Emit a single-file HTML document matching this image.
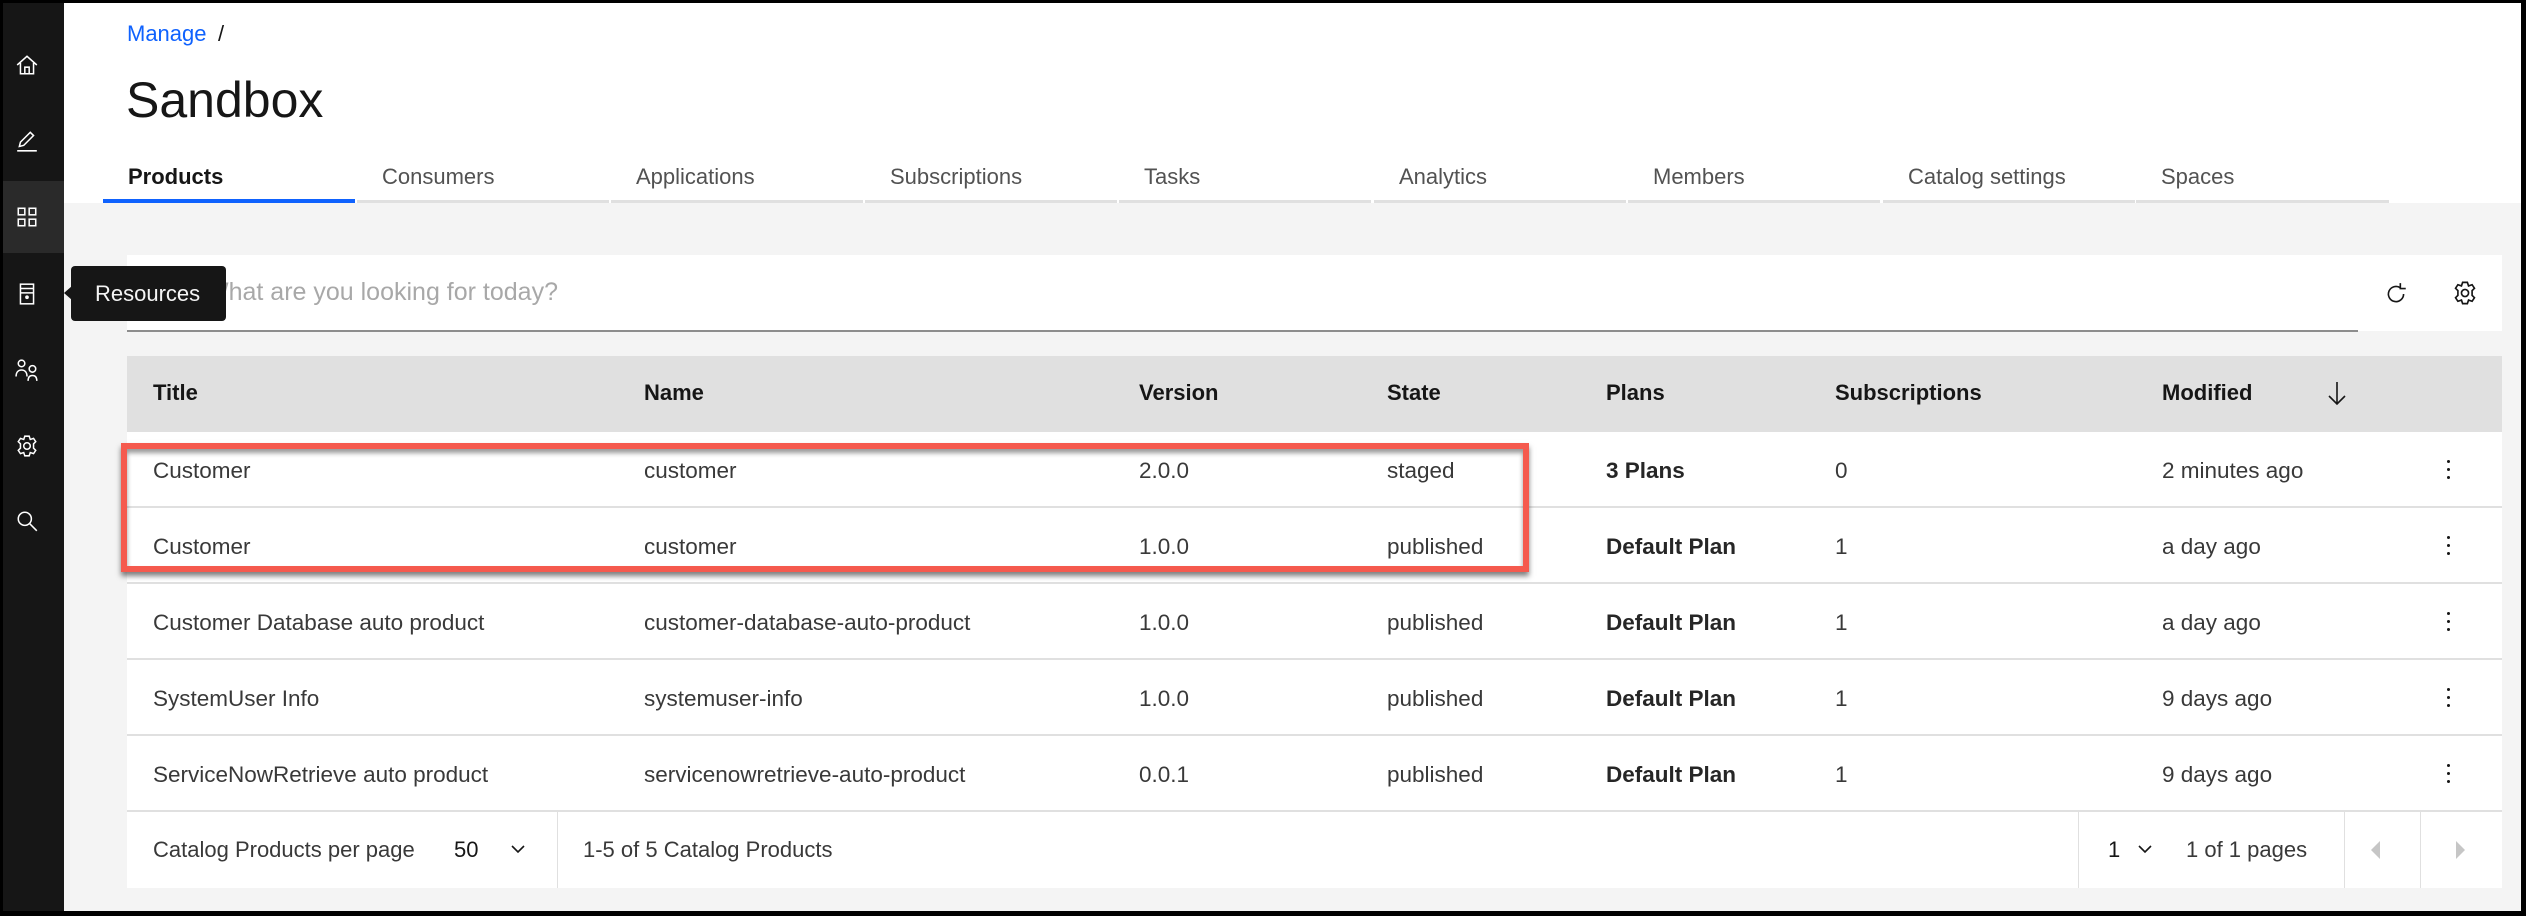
<!DOCTYPE html>
<html><head><meta charset="utf-8"><style>
*{box-sizing:border-box;margin:0;padding:0}
body{width:2526px;height:916px;background:#000;font-family:"Liberation Sans",sans-serif;color:#161616;position:relative;overflow:hidden}
.abs{position:absolute}
#main{position:absolute;left:64px;top:3px;width:2457px;height:908px;background:#f4f4f4}
#top{position:absolute;left:64px;top:3px;width:2457px;height:200px;background:#fff}
#side{position:absolute;left:3px;top:3px;width:61px;height:908px;background:#161616}
.ic{position:absolute;left:12px;width:24px;height:24px}
.t{position:absolute;font-size:22px;white-space:nowrap;line-height:1}
.tab{position:absolute;top:155px;height:48px;border-bottom:3px solid #e0e0e0;font-size:22px;color:#525252;padding-left:25px;padding-top:9px}
.hdr{font-weight:bold}
.row{position:absolute;left:127px;width:2375px;height:76px;background:#fff;border-bottom:2px solid #e0e0e0}
.row span{position:absolute;top:28px;font-size:22.5px;white-space:nowrap;color:#393939;line-height:1}
.b{font-weight:bold;color:#262626!important}
.keb{position:absolute;left:2320px;top:28px;width:4px}
.keb i{display:block;width:3px;height:3px;background:#161616;border-radius:2px;margin-bottom:5px}
</style></head><body>
<div id="main"></div>
<div id="top"></div>
<div id="side">
 <div class="abs" style="left:0;top:178px;width:61px;height:72px;background:#2a2a2a"></div>
 <svg class="ic" style="top:50px" viewBox="0 0 22 22" fill="none" stroke="#fff" stroke-width="1.4"><path d="M2 11L11 3l9 8M5 9v10h12V9M9 19v-6h4v6"/></svg>
 <svg class="ic" style="top:126px" viewBox="0 0 22 22" fill="none" stroke="#fff" stroke-width="1.4"><path d="M4 16l1-4 9-9 3 3-9 9-4 1zM2 20h18"/></svg>
 <svg class="ic" style="top:202px" viewBox="0 0 22 22" fill="none" stroke="#fff" stroke-width="1.4"><rect x="3" y="3" width="6" height="6"/><rect x="13" y="3" width="6" height="6"/><rect x="3" y="13" width="6" height="6"/><rect x="13" y="13" width="6" height="6"/></svg>
 <svg class="ic" style="top:279px" viewBox="0 0 22 22" fill="none" stroke="#fff" stroke-width="1.4"><rect x="5" y="2" width="12" height="18"/><path d="M5 6h12M5 10h12"/><circle cx="11" cy="14" r="1" fill="#fff"/></svg>
 <svg class="ic" style="top:355px" viewBox="0 0 22 22" fill="none" stroke="#fff" stroke-width="1.4"><circle cx="6" cy="5" r="3"/><path d="M1 17c0-4 2-6 5-6s5 2 5 6"/><circle cx="16" cy="10" r="3"/><path d="M12 21c0-3 1-5 4-5s4 2 4 5"/></svg>
 <svg class="ic" style="top:431px" viewBox="0 0 22 22" fill="none" stroke="#fff" stroke-width="1.4"><circle cx="11" cy="11" r="3"/><path d="M9 2h4l1 3 3-1 2 3-2 2v4l2 2-2 3-3-1-1 3H9l-1-3-3 1-2-3 2-2V9L3 7l2-3 3 1z"/></svg>
 <svg class="ic" style="top:506px" viewBox="0 0 22 22" fill="none" stroke="#fff" stroke-width="1.4"><circle cx="9" cy="9" r="6"/><path d="M13.5 13.5L20 20"/></svg>
</div>
<div class="t" style="left:127px;top:23px;color:#0f62fe">Manage</div>
<div class="t" style="left:218px;top:23px">/</div>
<div class="t" style="left:126px;top:75px;font-size:50px">Sandbox</div>

<div class="tab" style="left:103px;width:252px;border-bottom:4px solid #0f62fe;color:#161616;font-weight:bold">Products</div>
<div class="tab" style="left:357px;width:252px">Consumers</div>
<div class="tab" style="left:611px;width:252px">Applications</div>
<div class="tab" style="left:865px;width:252px">Subscriptions</div>
<div class="tab" style="left:1119px;width:252px">Tasks</div>
<div class="tab" style="left:1374px;width:252px">Analytics</div>
<div class="tab" style="left:1628px;width:252px">Members</div>
<div class="tab" style="left:1883px;width:252px">Catalog settings</div>
<div class="tab" style="left:2136px;width:253px">Spaces</div>

<div class="abs" style="left:127px;top:255px;width:2375px;height:76px;background:#fff"></div>
<div class="abs" style="left:127px;top:330px;width:2231px;height:2px;background:#8d8d8d"></div>
<div class="t" style="left:205px;top:280px;font-size:25px;color:#a8a8a8">What are you looking for today?</div>
<svg class="abs" style="left:2383px;top:281px" width="26" height="26" viewBox="0 0 24 24" fill="none" stroke="#161616" stroke-width="1.5"><path d="M19 12a7 7 0 1 1-3-5.7M16 2v5h5"/></svg>
<svg class="abs" style="left:2452px;top:280px" width="26" height="26" viewBox="0 0 22 22" fill="none" stroke="#161616" stroke-width="1.4"><circle cx="11" cy="11" r="3"/><path d="M9 2h4l1 3 3-1 2 3-2 2v4l2 2-2 3-3-1-1 3H9l-1-3-3 1-2-3 2-2V9L3 7l2-3 3 1z"/></svg>

<div class="abs" style="left:71px;top:266px;width:155px;height:55px;background:#161616;border-radius:4px"></div>
<div class="abs" style="left:64px;top:286px;width:0;height:0;border-top:7px solid transparent;border-bottom:7px solid transparent;border-right:8px solid #161616"></div>
<div class="t" style="left:95px;top:283px;color:#f4f4f4">Resources</div>

<div class="abs" style="left:127px;top:356px;width:2375px;height:76px;background:#e0e0e0"></div>
<div class="t hdr" style="left:153px;top:382px">Title</div>
<div class="t hdr" style="left:644px;top:382px">Name</div>
<div class="t hdr" style="left:1139px;top:382px">Version</div>
<div class="t hdr" style="left:1387px;top:382px">State</div>
<div class="t hdr" style="left:1606px;top:382px">Plans</div>
<div class="t hdr" style="left:1835px;top:382px">Subscriptions</div>
<div class="t hdr" style="left:2162px;top:382px">Modified</div>
<svg class="abs" style="left:2326px;top:380px" width="22" height="26" viewBox="0 0 22 26" fill="none" stroke="#161616" stroke-width="1.6"><path d="M11 2v22M3 16l8 8 8-8"/></svg>

<div class="row" style="top:432px"><span style="left:26px">Customer</span><span style="left:517px">customer</span><span style="left:1012px">2.0.0</span><span style="left:1260px">staged</span><span class="b" style="left:1479px">3 Plans</span><span style="left:1708px">0</span><span style="left:2035px">2 minutes ago</span><div class="keb"><i></i><i></i><i></i></div></div>
<div class="row" style="top:508px"><span style="left:26px">Customer</span><span style="left:517px">customer</span><span style="left:1012px">1.0.0</span><span style="left:1260px">published</span><span class="b" style="left:1479px">Default Plan</span><span style="left:1708px">1</span><span style="left:2035px">a day ago</span><div class="keb"><i></i><i></i><i></i></div></div>
<div class="row" style="top:584px"><span style="left:26px">Customer Database auto product</span><span style="left:517px">customer-database-auto-product</span><span style="left:1012px">1.0.0</span><span style="left:1260px">published</span><span class="b" style="left:1479px">Default Plan</span><span style="left:1708px">1</span><span style="left:2035px">a day ago</span><div class="keb"><i></i><i></i><i></i></div></div>
<div class="row" style="top:660px"><span style="left:26px">SystemUser Info</span><span style="left:517px">systemuser-info</span><span style="left:1012px">1.0.0</span><span style="left:1260px">published</span><span class="b" style="left:1479px">Default Plan</span><span style="left:1708px">1</span><span style="left:2035px">9 days ago</span><div class="keb"><i></i><i></i><i></i></div></div>
<div class="row" style="top:736px"><span style="left:26px">ServiceNowRetrieve auto product</span><span style="left:517px">servicenowretrieve-auto-product</span><span style="left:1012px">0.0.1</span><span style="left:1260px">published</span><span class="b" style="left:1479px">Default Plan</span><span style="left:1708px">1</span><span style="left:2035px">9 days ago</span><div class="keb"><i></i><i></i><i></i></div></div>

<div class="abs" style="left:121px;top:443px;width:1408px;height:129px;border:6px solid #f55a4e;box-shadow:0 4px 5px rgba(0,0,0,.5), inset 0 4px 5px rgba(0,0,0,.4)"></div>

<div class="abs" style="left:127px;top:812px;width:2375px;height:76px;background:#fff"></div>
<div class="t" style="left:153px;top:839px;color:#393939">Catalog Products per page</div>
<div class="t" style="left:454px;top:839px">50</div>
<svg class="abs" style="left:510px;top:843px" width="16" height="12" viewBox="0 0 16 12" fill="none" stroke="#161616" stroke-width="1.6"><path d="M2 3l6 6 6-6"/></svg>
<div class="abs" style="left:557px;top:812px;width:1px;height:76px;background:#e0e0e0"></div>
<div class="t" style="left:583px;top:839px;color:#393939">1-5 of 5 Catalog Products</div>
<div class="abs" style="left:2078px;top:812px;width:1px;height:76px;background:#e0e0e0"></div>
<div class="t" style="left:2108px;top:839px">1</div>
<svg class="abs" style="left:2137px;top:843px" width="16" height="12" viewBox="0 0 16 12" fill="none" stroke="#161616" stroke-width="1.6"><path d="M2 3l6 6 6-6"/></svg>
<div class="t" style="left:2186px;top:839px;color:#393939">1 of 1 pages</div>
<div class="abs" style="left:2344px;top:812px;width:1px;height:76px;background:#e0e0e0"></div>
<div class="abs" style="left:2420px;top:812px;width:1px;height:76px;background:#e0e0e0"></div>
<div class="abs" style="left:2371px;top:841px;border-top:9px solid transparent;border-bottom:9px solid transparent;border-right:9px solid #c6c6c6"></div>
<div class="abs" style="left:2456px;top:841px;border-top:9px solid transparent;border-bottom:9px solid transparent;border-left:9px solid #c6c6c6"></div>
</body></html>
